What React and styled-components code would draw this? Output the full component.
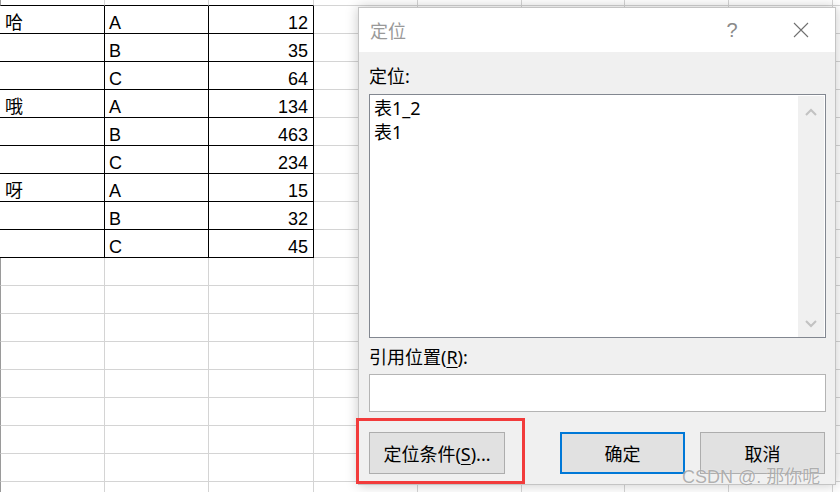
import React from 'react';
import styled, {createGlobalStyle} from 'styled-components';

// Sheet data
const colWidths = [105, 104, 105, 104, 104, 103, 104, 104, 104];
const tableRows = [
    ['哈', 'A', '12'],
    ['', 'B', '35'],
    ['', 'C', '64'],
    ['哦', 'A', '134'],
    ['', 'B', '463'],
    ['', 'C', '234'],
    ['呀', 'A', '15'],
    ['', 'B', '32'],
    ['', 'C', '45']
];
const emptyRowCount = 9;

const GlobalStyle = createGlobalStyle`
    html, body {
        margin: 0;
        padding: 0;
        background: #fff;
        overflow: hidden;
    }
    body {
        width: 840px;
        height: 492px;
        font-family: "Liberation Sans", "Noto Sans CJK SC", sans-serif;
    }
`;

const Page = styled.div`
    position: relative;
    width: 840px;
    height: 492px;
    overflow: hidden;
`;

// Spreadsheet
const Sheet = styled.div`
    margin-top: -22px;
    display: flex;
    flex-direction: column;
`;
const SheetRow = styled.div`
    display: grid;
    grid-template-columns: ${colWidths.map(w => `${w}px`).join(' ')};
    height: 28px;
`;
const Cell = styled.div`
    box-sizing: border-box;
    height: 28px;
    display: flex;
    align-items: flex-end;
    justify-content: ${p => p.$num ? 'flex-end' : 'flex-start'};
    padding: 0 ${p => p.$num ? '5px' : '0'} 0 ${p => p.$first ? '5px' : '4px'};
    border-right: 1px solid ${p => p.$darkRight ? '#000' : '#d4d4d4'};
    border-bottom: 1px solid ${p => p.$darkBottom ? '#000' : '#d4d4d4'};
    border-left: ${p => p.$edge ? '1px solid #9a9a9a' : 'none'};
    font-size: 18px;
    line-height: 20px;
    color: #000;
    white-space: nowrap;
`;

// Dialog
const Dialog = styled.section`
    position: absolute;
    left: 358px;
    top: 7px;
    width: 478px;
    box-sizing: border-box;
    border: 1px solid #c4c4c4;
    background: #f0f0f0;
    box-shadow: 0 0 12px rgba(0, 0, 0, .22);
    font-family: "Noto Sans", "Noto Sans CJK SC", sans-serif;
    color: #000;
`;
const TitleBar = styled.header`
    height: 44px;
    display: flex;
    align-items: center;
    padding-left: 11px;
    background: #fff;
`;
const Title = styled.h1`
    flex: 1;
    margin: 0;
    font-size: 18px;
    font-weight: normal;
    color: #999;
`;
const HelpMark = styled.span`
    width: 20px;
    text-align: center;
    font-size: 20px;
    font-weight: 300;
    color: #8a8a8a;
    margin-right: 50px;
    font-family: "Liberation Sans", sans-serif;
`;
const CloseButton = styled.span`
    display: flex;
    align-items: center;
    justify-content: center;
    width: 18px;
    margin-right: 25px;
`;
const Body = styled.div`
    display: flex;
    flex-direction: column;
    padding: 12px 9px 10px 10px;
`;
const Label = styled.div`
    height: 24px;
    font-size: 18px;
    line-height: 24px;
    margin-top: ${p => p.$gap || 0}px;

    u {
        text-underline-offset: 3px;
    }
`;
const ListBox = styled.div`
    margin-top: 6px;
    height: 244px;
    box-sizing: border-box;
    border: 1px solid #828790;
    background: #fff;
    display: flex;
`;
const ListItems = styled.ul`
    flex: 1;
    margin: 0;
    padding: 1px 4px;
    list-style: none;
    font-size: 18px;
    line-height: 24px;
`;
const ScrollBar = styled.div`
    width: 26px;
    margin: 1px 1px 0 0;
    background: #f0f0f0;
    display: flex;
    flex-direction: column;
    justify-content: space-between;
    align-items: center;
    padding: 12px 0 9px;
`;
const Input = styled.div`
    margin-top: 5px;
    height: 38px;
    box-sizing: border-box;
    border: 1px solid #b4b4b4;
    background: #fff;
`;
const Buttons = styled.div`
    margin-top: 20px;
    display: flex;
    gap: 15px;
`;
const Button = styled.button`
    box-sizing: border-box;
    width: ${p => p.$wide ? 136 : 125}px;
    height: 42px;
    margin-left: ${p => p.$push ? 40 : 0}px;
    padding: 0;
    background: #e1e1e1;
    border: ${p => p.$primary ? '2px solid #0078d7' : '1px solid #adadad'};
    font-family: inherit;
    font-size: 18px;
    color: #000;

    u {
        text-underline-offset: 3px;
    }
`;

// Annotations on top
const Highlight = styled.div`
    position: absolute;
    left: 356px;
    top: 418px;
    width: 169px;
    height: 66px;
    box-sizing: border-box;
    border: 3px solid #f23b3b;
`;
const Watermark = styled.div`
    position: absolute;
    left: 682px;
    top: 462px;
    font-family: "Liberation Sans", "Noto Sans CJK SC", sans-serif;
    font-size: 18px;
    color: rgba(110, 110, 110, .55);
    text-shadow: 0 0 1px rgba(255, 255, 255, .9);
    white-space: nowrap;
`;

const Chevron = ({up}) => (
    <svg width="12" height="8" viewBox="0 0 12 8">
        <polyline
            points={up ? '1,7 6,2 11,7' : '1,1 6,6 11,1'}
            fill="none"
            stroke="#c2c2c2"
            strokeWidth="2"
        />
    </svg>
);

const SheetGrid = () => {
    const rows = [];
    // partially hidden row above the table
    rows.push(
        <SheetRow key="top">
            {colWidths.map((w, c) => (
                <Cell key={c} $edge={c === 0} $darkBottom={c < 3} />
            ))}
        </SheetRow>
    );
    tableRows.forEach((r, i) => {
        rows.push(
            <SheetRow key={`t${i}`}>
                {colWidths.map((w, c) => (
                    <Cell
                        key={c}
                        $first={c === 0}
                        $num={c === 2}
                        $darkRight={c < 3}
                        $darkBottom={c < 3}
                    >
                        {c < 3 ? r[c] : null}
                    </Cell>
                ))}
            </SheetRow>
        );
    });
    for (let i = 0; i < emptyRowCount; i++) {
        rows.push(
            <SheetRow key={`e${i}`}>
                {colWidths.map((w, c) => (
                    <Cell key={c} $edge={c === 0} />
                ))}
            </SheetRow>
        );
    }
    return <Sheet>{rows}</Sheet>;
};

export default function App () {
    return (
        <Page>
            <GlobalStyle />
            <SheetGrid />
            <Dialog>
                <TitleBar>
                    <Title>定位</Title>
                    <HelpMark>?</HelpMark>
                    <CloseButton>
                        <svg width="16" height="16" viewBox="0 0 16 16">
                            <path d="M1 1 L15 15 M15 1 L1 15" stroke="#707070" strokeWidth="1.1" fill="none" />
                        </svg>
                    </CloseButton>
                </TitleBar>
                <Body>
                    <Label>定位:</Label>
                    <ListBox>
                        <ListItems>
                            <li>表1_2</li>
                            <li>表1</li>
                        </ListItems>
                        <ScrollBar>
                            <Chevron up />
                            <Chevron />
                        </ScrollBar>
                    </ListBox>
                    <Label $gap={7}>引用位置(<u>R</u>):</Label>
                    <Input />
                    <Buttons>
                        <Button $wide>定位条件(<u>S</u>)...</Button>
                        <Button $primary $push>确定</Button>
                        <Button>取消</Button>
                    </Buttons>
                </Body>
            </Dialog>
            <Highlight />
            <Watermark>CSDN @. 那你呢</Watermark>
        </Page>
    );
}
